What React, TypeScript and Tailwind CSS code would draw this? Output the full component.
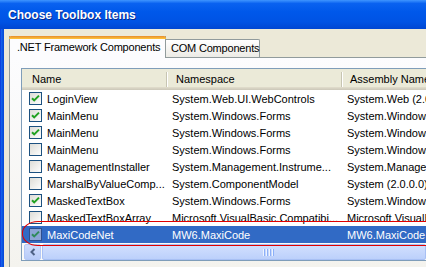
import React from "react";

type Row = { name: string; ns: string; asm: string; checked: boolean };

const rows: Row[] = [
  { name: "LoginView", ns: "System.Web.UI.WebControls", asm: "System.Web (2.0.0.0)", checked: true },
  { name: "MainMenu", ns: "System.Windows.Forms", asm: "System.Windows.Forms (2.0.0.0)", checked: true },
  { name: "MainMenu", ns: "System.Windows.Forms", asm: "System.Windows.Forms (2.0.0.0)", checked: true },
  { name: "MainMenu", ns: "System.Windows.Forms", asm: "System.Windows.Forms (2.0.0.0)", checked: false },
  { name: "ManagementInstaller", ns: "System.Management.Instrume...", asm: "System.Management (2.0.0.0)", checked: false },
  { name: "MarshalByValueComp...", ns: "System.ComponentModel", asm: "System (2.0.0.0)", checked: false },
  { name: "MaskedTextBox", ns: "System.Windows.Forms", asm: "System.Windows.Forms (2.0.0.0)", checked: true },
  { name: "MaskedTextBoxArray", ns: "Microsoft.VisualBasic.Compatibi...", asm: "Microsoft.VisualBasic.Compatibility", checked: false },
];

function CheckBox({ checked, selected }: { checked: boolean; selected?: boolean }) {
  return (
    <svg width="13" height="13" viewBox="0 0 13 13" className="shrink-0">
      <defs>
        <linearGradient id="cbg" x1="0" y1="0" x2="1" y2="1">
          <stop offset="0" stopColor="#DCDBD5" />
          <stop offset="1" stopColor="#FFFFFF" />
        </linearGradient>
      </defs>
      <rect x="0.5" y="0.5" width="12" height="12" fill={selected ? "#8CA5D6" : "url(#cbg)"} stroke={selected ? "#2E4F8E" : "#1C5180"} />
      {checked && (
        <path d="M3 6.2 L5.2 8.4 L10 3.6" fill="none" stroke={selected ? "#2E8A5A" : "#21A121"} strokeWidth="2" />
      )}
    </svg>
  );
}

export default function App() {
  return (
    <div className="w-[426px] h-[267px] overflow-hidden relative bg-[#ECE9D8] flex flex-col font-['Liberation_Sans',Arial,sans-serif] text-[11px] text-black">
      <div className="h-[29px] shrink-0 bg-[linear-gradient(to_bottom,#3F95FF_0%,#0A62F0_12%,#0058EA_40%,#0053E4_75%,#0046D2_100%)] flex items-center pl-[8px] pt-[1px]">
        <span className="text-white font-bold text-[12px] [text-shadow:1px_1px_#0A2A8C] whitespace-nowrap">Choose Toolbox Items</span>
      </div>
      <div className="flex flex-1 min-h-0">
        <div className="w-[4px] shrink-0 bg-[linear-gradient(to_right,#0831D9,#1660EC,#0855DD,#0845DA)]" />
        <div className="flex-1 flex flex-col pt-[7px] pl-[5px] min-w-0">
          <div className="flex items-end h-[21px] shrink-0 whitespace-nowrap">
            <div className="relative z-10 w-[157px] shrink-0 h-[22px] -mb-px bg-[#FCFCFE] border-x border-[#919B9C] flex flex-col">
              <div className="h-[3px] bg-[linear-gradient(to_bottom,#E68B2C,#FFC73C)] -mx-px rounded-t-[2px]" />
              <div className="flex-1 flex items-center pl-[7px] pb-[2px] tracking-[-0.2px]">.NET Framework Components</div>
            </div>
            <div className="w-[94px] shrink-0 h-[18px] bg-[linear-gradient(to_bottom,#FFFFFF,#ECEBE6)] border-t border-r border-[#919B9C] rounded-tr-[2px] flex items-center pl-[5px] tracking-[-0.2px]">
              COM Components
            </div>
          </div>
          <div className="flex-1 min-h-0 border-t border-l border-[#919B9C] bg-[linear-gradient(to_bottom,#FCFCFE,#F4F3EE)] pl-[11px] pt-[10px] flex flex-col">
            <div className="border-t border-l border-b border-[#7F9DB9] bg-white flex flex-col shrink-0">
              <div className="h-[21px] flex bg-[#EBEAD8] relative whitespace-nowrap">
                <div className="absolute left-0 right-0 bottom-0 h-[3px] bg-[linear-gradient(to_bottom,#E2DECD,#D6D2C2,#CBC7B8)]" />
                <div className="w-[144px] shrink-0 flex items-center pl-[10px] pb-[1px]">Name</div>
                <div className="w-[2px] shrink-0 flex flex-col py-[3px]"><div className="flex-1 flex"><div className="w-px bg-[#C7C5B2]" /><div className="w-px bg-white" /></div></div>
                <div className="w-[173px] shrink-0 flex items-center pl-[8px] pb-[1px]">Namespace</div>
                <div className="w-[2px] shrink-0 flex flex-col py-[3px]"><div className="flex-1 flex"><div className="w-px bg-[#C7C5B2]" /><div className="w-px bg-white" /></div></div>
                <div className="flex-1 flex items-center pl-[7px] pb-[1px]">Assembly Name</div>
              </div>
              {rows.map((r, i) => (
                <div key={i} className="h-[17px] flex items-center whitespace-nowrap">
                  <div className="w-[144px] shrink-0 flex items-center pl-[7px] gap-[5px] overflow-hidden">
                    <CheckBox checked={r.checked} />
                    <span className="pt-[1px]">{r.name}</span>
                  </div>
                  <div className="w-[175px] shrink-0 pl-[6px] pt-[1px] overflow-hidden">{r.ns}</div>
                  <div className="flex-1 pl-[6px] pt-[1px] overflow-hidden">{r.asm}</div>
                </div>
              ))}
              <div className="h-[17px] flex items-center whitespace-nowrap bg-[#316AC5] text-white">
                <div className="w-[144px] shrink-0 flex items-center pl-[7px] gap-[5px] overflow-hidden">
                  <CheckBox checked selected />
                  <span className="pt-[1px]">MaxiCodeNet</span>
                </div>
                <div className="w-[175px] shrink-0 pl-[6px] pt-[1px] overflow-hidden">MW6.MaxiCode</div>
                <div className="flex-1 pl-[6px] pt-[1px] overflow-hidden">MW6.MaxiCode</div>
              </div>
              <div className="h-[17px] flex bg-[#FBFBF8] pt-[1px]">
                <div className="w-[17px] h-[16px] shrink-0 ml-[2px] rounded-[2px] border border-[#B4C8F6] bg-[linear-gradient(to_bottom,#D0DDFD,#B8CCF8)] flex items-center justify-center">
                  <svg width="8" height="8" viewBox="0 0 8 8"><path d="M5.5 1 L2.5 4 L5.5 7" fill="none" stroke="#4D6185" strokeWidth="2" /></svg>
                </div>
                <div className="flex-1 ml-[1px] h-[16px] rounded-[2px] border border-[#A8C0F4] bg-[linear-gradient(to_bottom,#D2E0FE,#BCD0FB)] pl-[220px] flex items-center gap-[1px]">
                  {[0, 1, 2, 3].map((k) => (
                    <div key={k} className="w-[1px] h-[7px] bg-[#EEF4FE] border-r border-[#8CB0F8] box-content" />
                  ))}
                </div>
              </div>
            </div>
          </div>
        </div>
      </div>
      <div className="absolute left-[22px] top-[221px] w-[440px] h-[25px] border border-[#E00000] rounded-[16px/12px]" />
    </div>
  );
}
